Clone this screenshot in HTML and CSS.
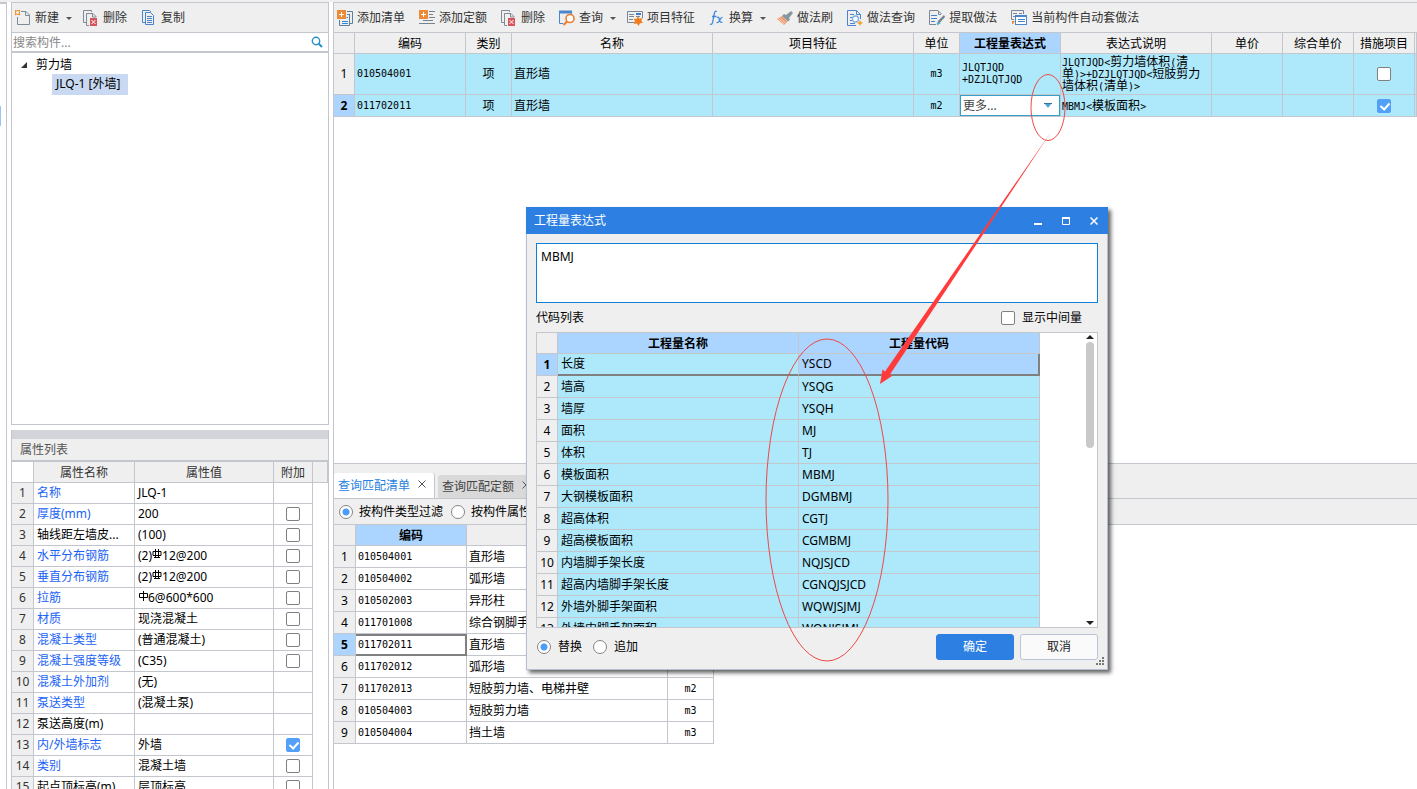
FILE: index.html
```html
<!DOCTYPE html>
<html lang="zh-CN">
<head>
<meta charset="utf-8">
<title>工程量表达式</title>
<link rel="stylesheet" href="styles.css">
</head>
<body>
<svg class="defs" aria-hidden="true">
  <symbol id="i-del" viewBox="0 0 16 16">
    <path d="M3 12.500H.5V.5H8.500V2M6 15.500H3.500V3.500H10L13.500 7" fill="none" stroke="#7f8b96"/>
    <path d="M9.500 3.500V7H13" fill="none" stroke="#7f8b96"/>
    <rect x="7" y="8" width="7" height="8" fill="#d8545c"/>
    <path d="M8.500 10l4 4M12.500 10l-4 4" stroke="#fff"/>
  </symbol>
  <symbol id="i-steel" viewBox="0 0 10 12">
    <path d="M1 3.500H9V7.500H1ZM3.500 1V10M6.500 1V10M2 9.500H8" fill="none" stroke="#000"/>
  </symbol>
</svg>
<main class="app">
  <aside class="strip"><div class="strip-mark"></div></aside>
  <section class="side">
    <div class="tree-pane">
      <div class="toolbar">
        <button class="tool"><svg viewBox="0 0 16 16"><path d="M6 1.500H11L14.500 5V14.500H2.500V7M10.500 1.500V5.500H14.500" fill="none" stroke="#7f8b96"/><path d="M0 0l1.500 1.500M5 0L3.500 1.500M0 5l1.500-1.500M5 5L3.500 3.500M2.500 0v1M2.500 4v1M0 2.500h1M4 2.500h1" fill="none" stroke="#f08a1d" stroke-width="1.300"/></svg>新建<svg class="caret" viewBox="0 0 6 3"><path d="M0 0H6L3 3Z"/></svg></button>
        <button class="tool"><svg viewBox="0 0 16 16"><use href="#i-del"/></svg>删除</button>
        <button class="tool"><svg viewBox="0 0 16 16"><path d="M4 12.500H1.500V.5H8.500L10 2M4.500 2.500H9.500L12.500 5.500V14.500H4.500Z" fill="none" stroke="#4c83c8"/><path d="M6 6.500H11M6 8.500H11M6 10.500H11M6 12.500H11" stroke="#4c83c8"/></svg>复制</button>
      </div>
      <div class="search"><input type="text" placeholder="搜索构件..." aria-label="搜索构件"><button aria-label="搜索"><svg viewBox="0 0 12 12"><circle cx="5" cy="5" r="3.700" fill="none" stroke="#258fc9" stroke-width="1.400"/><path d="M7.500 7.500L11 11" stroke="#258fc9" stroke-width="2"/></svg></button></div>
      <div class="tree">
        <div class="node"><svg viewBox="0 0 6 6"><path d="M6 0V6H0Z" fill="#333"/></svg>剪力墙</div>
        <div class="leaf">JLQ-1 [外墙]</div>
      </div>
    </div>
    <div class="props">
      <div class="grip"></div>
      <h2>属性列表</h2>
      <div class="props-body">
      <table class="grid props-grid">
        <colgroup><col class="w22"><col class="w101"><col class="w139"><col class="w39"><col></colgroup>
        <thead><tr><th class="blank"></th><th>属性名称</th><th>属性值</th><th>附加</th><th></th></tr></thead>
        <tbody>
        <tr><th>1</th><td class="link">名称</td><td>JLQ-1</td><td></td><td></td></tr>
        <tr><th>2</th><td class="link">厚度(mm)</td><td>200</td><td class="c"><input type="checkbox" aria-label="附加 厚度"></td><td></td></tr>
        <tr><th>3</th><td>轴线距左墙皮...</td><td>(100)</td><td class="c"><input type="checkbox" aria-label="附加 轴线距左墙皮"></td><td></td></tr>
        <tr><th>4</th><td class="link">水平分布钢筋</td><td>(2)<svg class="steel" viewBox="0 0 10 12"><use href="#i-steel"/></svg>12@200</td><td class="c"><input type="checkbox" aria-label="附加 水平分布钢筋"></td><td></td></tr>
        <tr><th>5</th><td class="link">垂直分布钢筋</td><td>(2)<svg class="steel" viewBox="0 0 10 12"><use href="#i-steel"/></svg>12@200</td><td class="c"><input type="checkbox" aria-label="附加 垂直分布钢筋"></td><td></td></tr>
        <tr><th>6</th><td class="link">拉筋</td><td><svg class="steel" viewBox="0 0 10 12"><path d="M1.500 3.500H9.500V7.500H1.500ZM5.500 1V11" fill="none" stroke="#000"/></svg>6@600*600</td><td class="c"><input type="checkbox" aria-label="附加 拉筋"></td><td></td></tr>
        <tr><th>7</th><td class="link">材质</td><td>现浇混凝土</td><td class="c"><input type="checkbox" aria-label="附加 材质"></td><td></td></tr>
        <tr><th>8</th><td class="link">混凝土类型</td><td>(普通混凝土)</td><td class="c"><input type="checkbox" aria-label="附加 混凝土类型"></td><td></td></tr>
        <tr><th>9</th><td class="link">混凝土强度等级</td><td>(C35)</td><td class="c"><input type="checkbox" aria-label="附加 混凝土强度等级"></td><td></td></tr>
        <tr><th>10</th><td class="link">混凝土外加剂</td><td>(无)</td><td></td><td></td></tr>
        <tr><th>11</th><td class="link">泵送类型</td><td>(混凝土泵)</td><td></td><td></td></tr>
        <tr><th>12</th><td>泵送高度(m)</td><td></td><td></td><td></td></tr>
        <tr><th>13</th><td class="link">内/外墙标志</td><td>外墙</td><td class="c"><input type="checkbox" checked aria-label="附加 内外墙标志"></td><td></td></tr>
        <tr><th>14</th><td class="link">类别</td><td>混凝土墙</td><td class="c"><input type="checkbox" aria-label="附加 类别"></td><td></td></tr>
        <tr><th>15</th><td>起点顶标高(m)</td><td>层顶标高</td><td class="c"><input type="checkbox" aria-label="附加 起点顶标高"></td><td></td></tr>
        </tbody>
      </table>
      </div>
    </div>
  </section>
  <section class="work">
    <div class="toolbar">
      <button class="tool"><svg viewBox="0 0 16 16"><rect width="9" height="9" fill="#ee8a35"/><path d="M2 4.500H7M4.500 2V7" stroke="#fff"/><path d="M10 1.500H15.500V13.500H13M2.500 10V15.500H12.500V4M10 4.500H13" fill="none" stroke="#5b7f9f"/><path d="M5 11.500H11M5 13.500H11M9.500 7.500H11" stroke="#2f86d6"/></svg>添加清单</button>
      <button class="tool"><svg viewBox="0 0 16 16"><rect width="9" height="9" fill="#ee8a35"/><path d="M2 4.500H7M4.500 2V7" stroke="#fff"/><path d="M10 1.500H16M10 4.500H14M10 7.500H16M4 10.500H14M0 13.500H16" stroke="#76828d"/></svg>添加定额</button>
      <button class="tool"><svg viewBox="0 0 16 16"><use href="#i-del"/></svg>删除</button>
      <button class="tool"><svg viewBox="0 0 16 16"><path d="M4 13.500H.5V1.500H12.500V5" fill="none" stroke="#4a86d0"/><path d="M0 2H13" stroke="#4a86d0" stroke-width="3"/><circle cx="11" cy="8.500" r="4" fill="#fff" stroke="#f07c2c" stroke-width="1.600"/><path d="M8 11.500L4.500 15" stroke="#f07c2c" stroke-width="2.200"/></svg>查询<svg class="caret" viewBox="0 0 6 3"><path d="M0 0H6L3 3Z"/></svg></button>
      <button class="tool"><svg viewBox="0 0 16 16"><path d="M8 12.500H.5V1.500H15.500V8" fill="none" stroke="#7b8792"/><path d="M2 4.500H7M2 6.500H7M2 9.500H6M9 6.500H13" stroke="#7b8792"/><path d="M9 4H14" stroke="#3b7fd0" stroke-width="2"/><path d="M11 6l1.300 2.700L15.500 8l-1.200 2.800L16 13l-3 .3L11.500 16l-1.600-2.500L7 14l1-3-1.500-2.300 3 .2Z" fill="#f07c1d"/></svg>项目特征</button>
      <button class="tool"><svg viewBox="0 0 16 16"><path d="M8 1.500C6 .5 5.600 2 5.200 4L3.700 12C3.300 14 2.500 15 1 14M3 6.500H7.500M8 7.500C10 6.500 10 8 10.500 10S11.500 13 13.500 12M13.500 7.500C12 7 11.500 9 10.700 10.500S9 13 7.500 12.500" fill="none" stroke="#4188d8" stroke-width="1.300"/></svg>换算<svg class="caret" viewBox="0 0 6 3"><path d="M0 0H6L3 3Z"/></svg></button>
      <button class="tool"><svg viewBox="0 0 16 16"><path d="M5 6L10.500 11.500L7 15L0 9Z" fill="#f09a6b"/><path d="M3 7.500L8.500 13M1.500 8.500L7 14" stroke="#fbd2b9"/><path d="M7 4L9 5L14 1L16 3L12 8L13 9.500L11 11.500L5 6Z" fill="#8a969d"/></svg>做法刷</button>
      <button class="tool"><svg viewBox="0 0 16 16"><path d="M9 15.500H.5V.5H9.500L13.500 4.500V9M9.500 .5V4.500H13.500" fill="none" stroke="#4a86d0"/><path d="M3 4.500H7M3 7.500H5M3 10.500H5M3 13.500H8" stroke="#4a86d0"/><circle cx="8.500" cy="9" r="3" fill="#fff" stroke="#7eafe2" stroke-width="1.300"/><path d="M13 10l1 2 2 1-2 1-1 2-1-2-2-1 2-1Z" fill="#f3a22b"/></svg>做法查询</button>
      <button class="tool"><svg viewBox="0 0 16 16"><path d="M9 .5H.5V14.500H7M9 .5L12.500 4" fill="none" stroke="#7b8792"/><path d="M9.500 1V4.500H12" fill="none" stroke="#7b8792"/><path d="M2 5.500H8M2 8.500H8M2 11.500H6" stroke="#3f83d4"/><path d="M15 5L9 11L8 14L10.500 13L16 7Z" fill="#71818d"/><path d="M8 14.500l3-2" stroke="#3db8cc" stroke-width="2"/></svg>提取做法</button>
      <button class="tool"><svg viewBox="0 0 16 16"><path d="M3 9.500H.5V.5H12.500V4" fill="none" stroke="#7b8792"/><path d="M2 3.500H6M8 3.500H11M2 6.500H4" stroke="#7b8792"/><rect x="4.500" y="5.500" width="11" height="9" fill="#fff" stroke="#4a86d0"/><path d="M4 6H16" stroke="#4a86d0" stroke-width="2"/><path d="M7 9.500H14M7 11.500H14" stroke="#4a86d0"/><path d="M1 11h3L2 14H1Z" fill="#f08a35"/></svg>当前构件自动套做法</button>
    </div>
    <div class="main-table">
      <table class="grid bill">
        <colgroup><col class="w21"><col class="w111"><col class="w46"><col class="w201"><col class="w201"><col class="w46"><col class="w101"><col class="w151"><col class="w71"><col class="w71"><col class="w61"><col></colgroup>
        <thead><tr><th></th><th>编码</th><th>类别</th><th>名称</th><th>项目特征</th><th>单位</th><th class="on">工程量表达式</th><th>表达式说明</th><th>单价</th><th>综合单价</th><th>措施项目</th><th></th></tr></thead>
        <tbody>
          <tr class="tall"><th>1</th><td class="code">010504001</td><td class="c">项</td><td>直形墙</td><td></td><td class="c code">m3</td><td class="code">JLQTJQD<br>+DZJLQTJQD</td><td class="mixed"><span class="code">JLQTJQD&lt;</span>剪力墙体积<span class="code">(</span>清<br>单<span class="code">)&gt;+DZJLQTJQD&lt;</span>短肢剪力<br>墙体积<span class="code">(</span>清单<span class="code">)&gt;</span></td><td></td><td></td><td class="c"><input type="checkbox" aria-label="措施项目 1"></td><td></td></tr>
          <tr><th class="on">2</th><td class="code">011702011</td><td class="c">项</td><td>直形墙</td><td></td><td class="c code">m2</td><td class="edit"><div class="combo"><select aria-label="工程量表达式"><option>更多...</option></select><svg viewBox="0 0 8 5"><path d="M0 0H8L4 5Z" fill="#5ba3d6"/><path d="M0 .5H8" stroke="#3a6d94"/></svg></div></td><td class="mixed"><span class="code">MBMJ&lt;</span>模板面积<span class="code">&gt;</span></td><td></td><td></td><td class="c"><input type="checkbox" checked aria-label="措施项目 2"></td><td></td></tr>
        </tbody>
      </table>
    </div>
    <div class="match">
      <div class="tabs">
        <button class="tab active">查询匹配清单<svg viewBox="0 0 8 8"><path d="M.5 .5L7.500 7.500M7.500 .5L.5 7.500"/></svg></button>
        <button class="tab">查询匹配定额<svg viewBox="0 0 8 8"><path d="M.5 .5L7.500 7.500M7.500 .5L.5 7.500"/></svg></button>
      </div>
      <div class="filters">
        <label><input type="radio" name="filter" checked>按构件类型过滤</label>
        <label><input type="radio" name="filter">按构件属性过滤</label>
      </div>
      <div class="match-body">
      <table class="grid match-grid">
        <colgroup><col class="w22"><col class="w111"><col class="w201"><col class="w46"></colgroup>
        <thead><tr><th></th><th class="on">编码</th><th>名称</th><th>单位</th></tr></thead>
        <tbody>
          <tr><th>1</th><td class="code">010504001</td><td>直形墙</td><td class="c code">m3</td></tr>
          <tr><th>2</th><td class="code">010504002</td><td>弧形墙</td><td class="c code">m3</td></tr>
          <tr><th>3</th><td class="code">010502003</td><td>异形柱</td><td class="c code">m3</td></tr>
          <tr><th>4</th><td class="code">011701008</td><td>综合钢脚手架</td><td class="c code">m2</td></tr>
          <tr><th class="on">5</th><td class="code picked">011702011</td><td>直形墙</td><td class="c code">m2</td></tr>
          <tr><th>6</th><td class="code">011702012</td><td>弧形墙</td><td class="c code">m2</td></tr>
          <tr><th>7</th><td class="code">011702013</td><td>短肢剪力墙、电梯井壁</td><td class="c code">m2</td></tr>
          <tr><th>8</th><td class="code">010504003</td><td>短肢剪力墙</td><td class="c code">m3</td></tr>
          <tr><th>9</th><td class="code">010504004</td><td>挡土墙</td><td class="c code">m3</td></tr>
        </tbody>
      </table>
      </div>
    </div>
  </section>
</main>

<div class="dialog" role="dialog" aria-label="工程量表达式">
  <header><h1>工程量表达式</h1>
    <button aria-label="最小化"><svg viewBox="0 0 8 8"><path d="M0 7H8" stroke-width="2"/></svg></button>
    <button aria-label="最大化"><svg viewBox="0 0 8 8"><path d="M.5 1V7.500H7.500V1M0 1.500H8"/><path d="M0 1H8" stroke-width="2"/></svg></button>
    <button aria-label="关闭"><svg viewBox="0 0 8 8"><path d="M.5 .5L7.500 7.500M7.500 .5L.5 7.500" stroke-width="1.500"/></svg></button>
  </header>
  <div class="dialog-body">
    <textarea aria-label="表达式" spellcheck="false">MBMJ</textarea>
    <div class="caption"><span>代码列表</span><label><input type="checkbox">显示中间量</label></div>
    <div class="codes">
      <table class="grid code-grid">
        <colgroup><col class="w21"><col class="w241"><col class="w241"></colgroup>
        <thead><tr><th></th><th class="on">工程量名称</th><th class="on">工程量代码</th></tr></thead>
        <tbody>
          <tr class="sel"><th class="on">1</th><td>长度</td><td>YSCD</td></tr>
          <tr><th>2</th><td>墙高</td><td>YSQG</td></tr>
          <tr><th>3</th><td>墙厚</td><td>YSQH</td></tr>
          <tr><th>4</th><td>面积</td><td>MJ</td></tr>
          <tr><th>5</th><td>体积</td><td>TJ</td></tr>
          <tr><th>6</th><td>模板面积</td><td>MBMJ</td></tr>
          <tr><th>7</th><td>大钢模板面积</td><td>DGMBMJ</td></tr>
          <tr><th>8</th><td>超高体积</td><td>CGTJ</td></tr>
          <tr><th>9</th><td>超高模板面积</td><td>CGMBMJ</td></tr>
          <tr><th>10</th><td>内墙脚手架长度</td><td>NQJSJCD</td></tr>
          <tr><th>11</th><td>超高内墙脚手架长度</td><td>CGNQJSJCD</td></tr>
          <tr><th>12</th><td>外墙外脚手架面积</td><td>WQWJSJMJ</td></tr>
          <tr><th>13</th><td>外墙内脚手架面积</td><td>WQNJSJMJ</td></tr>
        </tbody>
      </table>
      <div class="scroll"><svg viewBox="0 0 8 4"><path d="M0 4L4 0L8 4Z"/></svg><div class="thumb"></div><svg viewBox="0 0 8 4"><path d="M0 0L4 4L8 0Z"/></svg></div>
    </div>
    <footer>
      <label><input type="radio" name="mode" checked>替换</label>
      <label><input type="radio" name="mode">追加</label>
      <button class="primary">确定</button>
      <button>取消</button>
    </footer>
  </div>
  <svg class="sizer" viewBox="0 0 8 8"><path d="M6 0h2v2H6ZM3 3h2v2H3ZM6 3h2v2H6ZM0 6h2v2H0ZM3 6h2v2H3ZM6 6h2v2H6Z" fill="#777"/></svg>
</div>

<svg class="marks" viewBox="0 0 1417 789" aria-hidden="true">
  <ellipse cx="1048" cy="107.500" rx="17" ry="33"/>
  <ellipse cx="827" cy="500" rx="61" ry="161"/>
  <path class="arrow" d="M1051 132L890 374.500L892 376L880 384L882.500 369.500L885 371.500Z"/>
</svg>
</body>
</html>
```
FILE: styles.css
```css
* { box-sizing: border-box; }
body {
  margin: 0; height: 100vh; overflow: hidden; position: relative; background: #fff; color: #000;
  font: 12px/16px "Noto Sans", "Noto Sans CJK SC", sans-serif;
}
button, input, select, textarea { font: inherit; color: inherit; margin: 0; }
button { border: 0; background: none; padding: 0; }
h1, h2 { margin: 0; font-size: 12px; font-weight: normal; }
svg { display: block; flex: none; }
.defs { position: absolute; width: 0; height: 0; }

.app { display: grid; grid-template-columns: 7px 318px minmax(0, 1fr); column-gap: 4px; height: 100%; padding-top: 2px; background: linear-gradient(#efefef 2px, #fff 2px); }
.strip { border-top: 2px solid #c3c6cc; border-right: 1px solid #c3c6cc; padding-top: 102px; }
.strip-mark { height: 20px; width: 1px; background: #9cc3f2; }

.side { display: flex; flex-direction: column; gap: 5px; min-height: 0; }
.tree-pane { border: 1px solid #c3c6cc; display: flex; flex-direction: column; flex: 423 1 0; min-height: 0; }
.toolbar { display: flex; align-items: center; gap: 14px; height: 30px; flex: none; padding-left: 3px; background: #efefef; border-bottom: 1px solid #c3c6cc; overflow: hidden; }
.tool { display: flex; align-items: center; gap: 4px; color: #333; white-space: nowrap; }
.tool svg { width: 16px; height: 16px; }
.tool .caret { width: 6px; height: 3px; margin: 2px -3px 0 3px; fill: #555; }
.search { display: flex; align-items: center; height: 20px; border-bottom: 2px solid #c3c6cc; flex: none; }
.search input { flex: 1; min-width: 0; height: 18px; border: 0; padding: 0 1px; outline: 0; background: none; }
.search input::placeholder { color: #888; }
.search button { padding: 0 5px; }
.search svg { width: 12px; height: 12px; }
.tree { padding: 3px 9px; }
.node { display: flex; align-items: center; gap: 9px; height: 18px; }
.node svg { width: 6px; height: 6px; }
.leaf { display: inline-block; min-width: 76px; margin-left: 31px; padding: 2px 4px 3px; line-height: 16px; background: #c8d9f1; white-space: nowrap; }

.props { display: flex; flex-direction: column; flex: 360 1 0; min-height: 0; overflow: hidden; border: solid #c3c6cc; border-width: 0 1px; }
.grip { height: 9px; background: #d2d4da; flex: none; }
.props h2 { height: 23px; padding: 3px 8px; flex: none; background: #efefef; color: #555; border-bottom: 2px solid #c3c6cc; }
.props-body { flex: 1; min-height: 0; overflow: hidden; }

.grid { table-layout: fixed; border-collapse: separate; border-spacing: 0; }
.grid th, .grid td { height: 22px; padding: 0 2px; border: solid #c3c6cc; border-width: 0 1px 1px 0; text-align: left; vertical-align: middle; line-height: 16px; overflow: hidden; white-space: nowrap; }
.grid th { font-weight: normal; text-align: center; padding: 0; background: #efefef; }
.grid thead th { height: 21px; padding-top: 1px; }
.grid th.on { font-weight: bold; background: #abd5ff; }
.grid .c { text-align: center; }
.grid .code, .code { font-family: "DejaVu Sans Mono", monospace; font-size: 10px; line-height: 12px; }
.w21 { width: 21px; } .w22 { width: 22px; } .w39 { width: 39px; } .w46 { width: 46px; } .w61 { width: 61px; }
.w71 { width: 71px; } .w101 { width: 101px; } .w111 { width: 111px; } .w139 { width: 139px; } .w151 { width: 151px; }
.w201 { width: 201px; } .w241 { width: 241px; }

.props-grid { width: 100%; }
.props-grid tbody th, .props-grid tbody td { height: 21px; padding-left: 3px; }
.props-grid tbody th { padding: 0; color: #333; }
.props-grid thead th { color: #333; }
.props-grid .blank { background: #fff; }
.props-grid .link { color: #1a63f5; }
.props-grid tbody td:last-child { border: 0; }
.props-grid tbody .c { padding: 0; }
.steel { display: inline-block; width: 10px; height: 12px; vertical-align: top; }

input[type="checkbox"] { appearance: none; display: block; position: relative; width: 14px; height: 14px; border: 1px solid #808080; border-radius: 2px; background: #fff; flex: none; }
td input[type="checkbox"] { margin: 0 auto; }
input[type="checkbox"]:checked { background: #52a0f8; border-color: #52a0f8; }
input[type="checkbox"]:checked::after { content: ""; position: absolute; left: 4px; top: 1px; width: 4px; height: 7px; border: solid #fff; border-width: 0 2px 2px 0; transform: rotate(42deg); }
input[type="radio"] { appearance: none; width: 14px; height: 14px; border: 1px solid #858585; border-radius: 50%; background: #fff; flex: none; }
input[type="radio"]:checked { background: radial-gradient(circle, #4c9cf8 3px, #fff 4px); }
label { display: flex; align-items: center; white-space: nowrap; }

.work { display: flex; flex-direction: column; min-height: 0; border-left: 1px solid #c3c6cc; background: #fff; }
.work > .toolbar { height: 31px; border-top: 1px solid #c3c6cc; }
.main-table { flex: 431 1 0; min-height: 0; overflow: hidden; border-bottom: 1px solid #c3c6cc; }
.bill { width: 100%; }
.bill tbody td { background: #ade8fb; }
.bill .tall td, .bill .tall th { height: 41px; }
.bill .mixed { line-height: 12px; padding: 0 1px; }
.bill .mixed .code { line-height: 0; }
.bill tbody .edit { padding: 0; }
.combo { position: relative; height: 21px; }
.combo select { appearance: none; display: block; width: 100%; height: 100%; border: 1px solid #369fc9; border-radius: 0; padding: 0 2px; background: #fff; color: #444; }
.combo svg { position: absolute; right: 8px; top: 8px; width: 8px; height: 5px; pointer-events: none; }

.match { flex: 325 1 0; min-height: 0; display: flex; flex-direction: column; overflow: hidden; background: #fff; }
.tabs { display: flex; align-items: flex-end; gap: 3px; height: 35px; flex: none; background: #efefef; border-bottom: 1px solid #c3c6cc; }
.tab { display: flex; align-items: center; gap: 8px; height: 23px; padding: 0 8px 0 4px; background: #d9d9d9; border-radius: 3px 3px 0 0; color: #444; white-space: nowrap; }
.tab.active { height: 25px; padding-top: 1px; background: #fff; color: #2a7fe0; border-right: 1px solid #c3c6cc; }
.tab svg { width: 8px; height: 8px; fill: none; stroke: #555; margin-bottom: 4px; }
.filters { display: flex; gap: 8px; height: 26px; flex: none; padding-left: 5px; background: #efefef; border-bottom: 1px solid #c3c6cc; }
.filters label { gap: 6px; }
.match-body { flex: 1; min-height: 0; overflow: hidden; }
.match-grid { width: 380px; }
.match-grid .picked { border: 2px solid #808080; border-left-width: 0; }

.dialog { position: absolute; left: 526px; top: 207px; width: 582px; height: 463px; display: flex; flex-direction: column; background: #efefef; border: solid #b4bfd2; border-width: 0 1px 1px; box-shadow: 3px 3px 4px rgba(0, 0, 0, .6); }
.dialog header { display: flex; align-items: center; height: 27px; flex: none; gap: 20px; margin: 0 -1px; padding: 0 10px 0 8px; background: #2d7fe2; color: #fff; }
.dialog h1 { flex: 1; }
.dialog header svg { width: 8px; height: 8px; fill: none; stroke: #fff; }
.dialog-body { flex: 1; min-height: 0; display: flex; flex-direction: column; padding: 9px 9px 3px; }
textarea { display: block; height: 60px; flex: none; resize: none; border: 1px solid #1080d8; border-radius: 0; padding: 5px 4px; outline: 0; background: #fff; }
.caption { display: flex; align-items: center; justify-content: space-between; height: 29px; flex: none; padding-right: 16px; }
.caption label { gap: 7px; }
.codes { flex: 1; min-height: 0; display: flex; justify-content: space-between; overflow: hidden; border: 1px solid #c3c6cc; background: #fff; }
.code-grid { width: 503px; align-self: flex-start; }
.code-grid td { background: #ade8fb; }
.grid.code-grid td { padding-left: 3px; }
.code-grid .sel td { border-bottom: 2px solid #808080; }
.code-grid .sel td:last-child { border-right: 2px solid #808080; background: #abd5ff; }
.scroll { display: flex; flex-direction: column; align-items: center; width: 14px; padding: 2px 0; fill: #222; }
.scroll svg { width: 8px; height: 4px; }
.thumb { width: 8px; height: 106px; margin: 3px 0 auto; border-radius: 4px; background: #c9c9c9; }
.dialog footer { display: flex; align-items: center; gap: 11px; height: 38px; flex: none; padding-left: 1px; }
.dialog footer label { gap: 7px; }
.dialog footer button { width: 78px; height: 26px; margin-left: -5px; border: 1px solid #bac4d8; border-radius: 3px; background: #fafafa; color: #222; }
.dialog footer .primary { margin-left: auto; background: #2d7fe2; border-color: #2d7fe2; color: #fff; }
.sizer { position: absolute; right: 3px; bottom: 4px; width: 8px; height: 8px; }
.marks { position: absolute; left: 0; top: 0; width: 1417px; height: 789px; pointer-events: none; fill: none; stroke: #f04848; }
.marks .arrow { fill: #ff3b3b; stroke: none; }
```
